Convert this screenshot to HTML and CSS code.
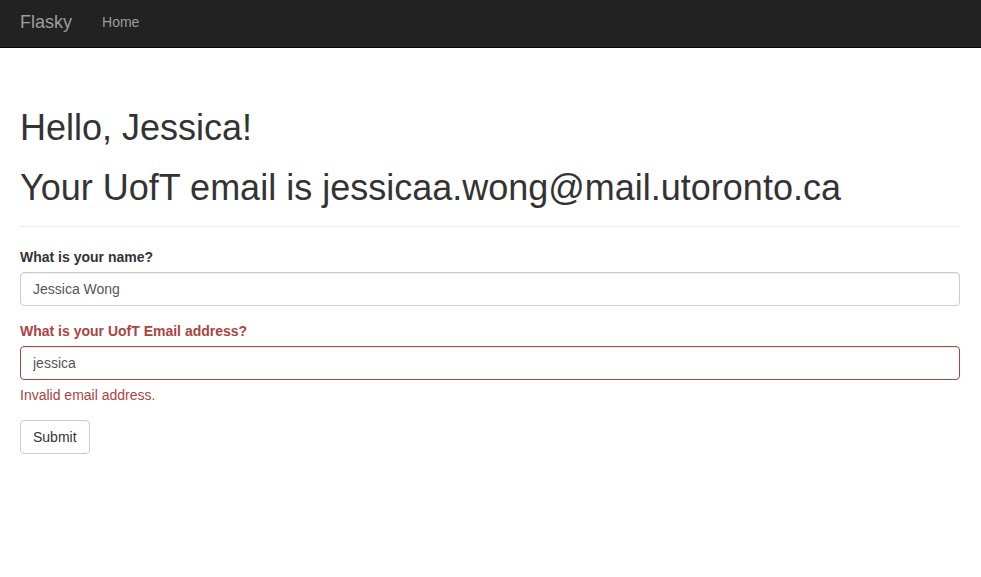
FILE: index.html
```html
<!DOCTYPE html>
<html lang="en">
<head>
<meta charset="utf-8">
<title>Flasky</title>
<link rel="stylesheet" href="styles.css">
</head>
<body>
<nav class="navbar">
  <div class="navbar-inner">
    <a class="brand" href="#">Flasky</a>
    <ul class="nav">
      <li><a href="#">Home</a></li>
    </ul>
  </div>
</nav>
<main class="container">
  <div class="page-header">
    <h1>Hello, Jessica!</h1>
    <h1>Your UofT email is jessicaa.wong@mail.utoronto.ca</h1>
  </div>
  <form class="form">
    <div class="form-group">
      <label class="control-label" for="name">What is your name?</label>
      <input class="form-control" id="name" type="text" value="Jessica Wong">
    </div>
    <div class="form-group has-error">
      <label class="control-label" for="email">What is your UofT Email address?</label>
      <input class="form-control" id="email" type="text" value="jessica">
      <span class="help-block">Invalid email address.</span>
    </div>
    <button class="btn" type="submit">Submit</button>
  </form>
</main>
</body>
</html>
```
FILE: styles.css
```css
* { box-sizing: border-box; }
html, body {
  margin: 0;
  padding: 0;
  background: #fff;
  font-family: "Liberation Sans", Arial, Helvetica, sans-serif;
  font-size: 14px;
  line-height: 1.42857143;
  color: #333;
}
.navbar {
  background: #222;
  border-bottom: 1px solid #080808;
  height: 48px;
}
.navbar-inner {
  display: flex;
  align-items: flex-start;
  padding: 0 20px;
  height: 47px;
}
.brand {
  font-size: 18px;
  line-height: 20px;
  padding: 12px 15px 15px 0;
  color: #9d9d9d;
  text-decoration: none;
}
.nav {
  list-style: none;
  margin: 0;
  padding: 0;
  display: flex;
}
.nav a {
  display: block;
  padding: 12px 15px 15px;
  line-height: 20px;
  font-size: 14px;
  color: #9d9d9d;
  text-decoration: none;
}
.container {
  width: 940px;
  margin-left: 20px;
}
.page-header {
  margin: 60px 0 20px;
  padding-bottom: 9px;
  border-bottom: 1px solid #eee;
}
h1 {
  font-family: inherit;
  font-weight: 500;
  font-size: 36px;
  line-height: 1.1;
  margin: 20px 0 10px;
}
.page-header h1:first-child { margin-top: 0; }
.form-group { margin-bottom: 15px; }
.control-label {
  display: inline-block;
  max-width: 100%;
  margin-bottom: 5px;
  font-weight: bold;
}
.form-control {
  display: block;
  width: 100%;
  height: 34px;
  padding: 6px 12px;
  font-family: inherit;
  font-size: 14px;
  line-height: 1.42857143;
  color: #555;
  background: #fff;
  border: 1px solid #ccc;
  border-radius: 4px;
  box-shadow: inset 0 1px 1px rgba(0,0,0,.075);
  margin: 0;
}
.has-error .control-label,
.has-error .help-block { color: #a94442; }
.has-error .form-control { border-color: #a94442; }
.help-block {
  display: block;
  margin-top: 5px;
  margin-bottom: 10px;
}
.btn {
  display: inline-block;
  height: 34px;
  padding: 6px 12px;
  font-family: inherit;
  font-size: 14px;
  line-height: 1.42857143;
  color: #333;
  background: #fff;
  border: 1px solid #ccc;
  border-radius: 4px;
  margin: 0;
  cursor: pointer;
}
```
